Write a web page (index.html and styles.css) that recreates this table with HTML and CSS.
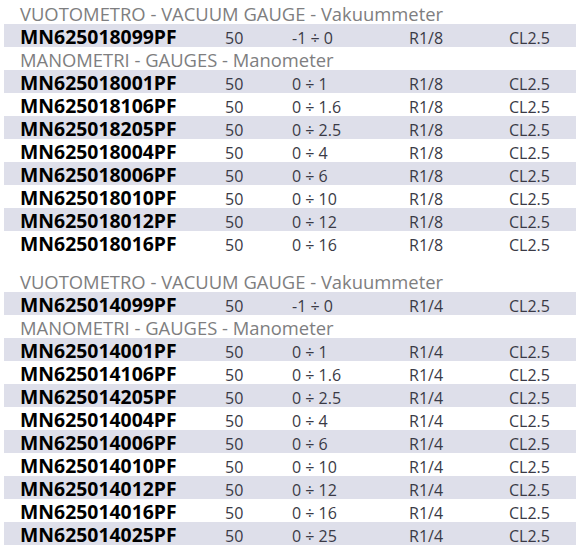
FILE: index.html
```html
<!DOCTYPE html>
<html>
<head>
<meta charset="utf-8">
<link rel="stylesheet" href="styles.css">
</head>
<body>
<div class="sheet">
  <div class="title first">VUOTOMETRO - VACUUM GAUGE - Vakuummeter</div>
  <div class="row odd"><span class="code">MN625018099PF</span><span>50</span><span>-1 ÷ 0</span><span>R1/8</span><span>CL2.5</span></div>
  <div class="title">MANOMETRI - GAUGES - Manometer</div>
  <div class="row odd"><span class="code">MN625018001PF</span><span>50</span><span>0 ÷ 1</span><span>R1/8</span><span>CL2.5</span></div>
  <div class="row"><span class="code">MN625018106PF</span><span>50</span><span>0 ÷ 1.6</span><span>R1/8</span><span>CL2.5</span></div>
  <div class="row odd"><span class="code">MN625018205PF</span><span>50</span><span>0 ÷ 2.5</span><span>R1/8</span><span>CL2.5</span></div>
  <div class="row"><span class="code">MN625018004PF</span><span>50</span><span>0 ÷ 4</span><span>R1/8</span><span>CL2.5</span></div>
  <div class="row odd"><span class="code">MN625018006PF</span><span>50</span><span>0 ÷ 6</span><span>R1/8</span><span>CL2.5</span></div>
  <div class="row"><span class="code">MN625018010PF</span><span>50</span><span>0 ÷ 10</span><span>R1/8</span><span>CL2.5</span></div>
  <div class="row odd"><span class="code">MN625018012PF</span><span>50</span><span>0 ÷ 12</span><span>R1/8</span><span>CL2.5</span></div>
  <div class="row"><span class="code">MN625018016PF</span><span>50</span><span>0 ÷ 16</span><span>R1/8</span><span>CL2.5</span></div>
  <div class="spacer"></div>
  <div class="title">VUOTOMETRO - VACUUM GAUGE - Vakuummeter</div>
  <div class="row odd"><span class="code">MN625014099PF</span><span>50</span><span>-1 ÷ 0</span><span>R1/4</span><span>CL2.5</span></div>
  <div class="title">MANOMETRI - GAUGES - Manometer</div>
  <div class="row odd"><span class="code">MN625014001PF</span><span>50</span><span>0 ÷ 1</span><span>R1/4</span><span>CL2.5</span></div>
  <div class="row"><span class="code">MN625014106PF</span><span>50</span><span>0 ÷ 1.6</span><span>R1/4</span><span>CL2.5</span></div>
  <div class="row odd"><span class="code">MN625014205PF</span><span>50</span><span>0 ÷ 2.5</span><span>R1/4</span><span>CL2.5</span></div>
  <div class="row"><span class="code">MN625014004PF</span><span>50</span><span>0 ÷ 4</span><span>R1/4</span><span>CL2.5</span></div>
  <div class="row odd"><span class="code">MN625014006PF</span><span>50</span><span>0 ÷ 6</span><span>R1/4</span><span>CL2.5</span></div>
  <div class="row"><span class="code">MN625014010PF</span><span>50</span><span>0 ÷ 10</span><span>R1/4</span><span>CL2.5</span></div>
  <div class="row odd"><span class="code">MN625014012PF</span><span>50</span><span>0 ÷ 12</span><span>R1/4</span><span>CL2.5</span></div>
  <div class="row"><span class="code">MN625014016PF</span><span>50</span><span>0 ÷ 16</span><span>R1/4</span><span>CL2.5</span></div>
  <div class="row odd"><span class="code">MN625014025PF</span><span>50</span><span>0 ÷ 25</span><span>R1/4</span><span>CL2.5</span></div>
</div>
</body>
</html>
```
FILE: styles.css
```css
html, body {
  margin: 0;
  padding: 0;
  background: #ffffff;
}
.sheet {
  padding-left: 4px;
  font-family: "Open Sans", "Noto Sans", sans-serif;
}
.title {
  height: 21px;
  padding-top: 2px;
  line-height: 21px;
  padding-left: 16px;
  font-size: 18.4px;
  color: #7e7e80;
  white-space: nowrap;
}
.title.first {
  height: 21px;
  padding-top: 3px;
}
.row {
  display: grid;
  grid-template-columns: 205px 67px 117px 100px 1fr;
  align-items: baseline;
  height: 21px;
  padding-top: 2px;
  line-height: 21px;
  padding-left: 16px;
  font-size: 16px;
  color: #3a3a46;
  white-space: nowrap;
}
.row.odd {
  background: #dedfea;
}
.code {
  font-weight: 700;
  font-size: 19.4px;
  color: #000000;
}
.spacer {
  height: 15px;
}
```
